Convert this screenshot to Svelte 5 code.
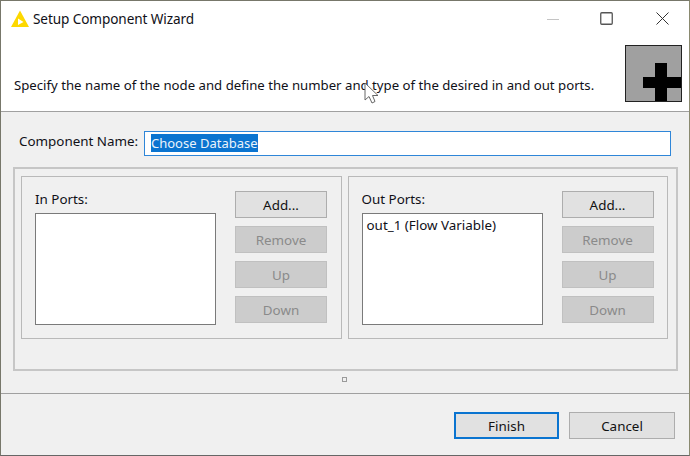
<script>
  const groups = [
    { title: 'In Ports:', items: [] },
    { title: 'Out Ports:', items: ['out_1 (Flow Variable)'] }
  ];
  const actions = [
    { label: 'Add...', disabled: false },
    { label: 'Remove', disabled: true },
    { label: 'Up', disabled: true },
    { label: 'Down', disabled: true }
  ];
</script>

<div class="window">
  <header class="header">
    <div class="titlebar">
      <svg class="logo" width="20" height="18" viewBox="0 0 20 18" aria-hidden="true">
        <path d="M10 0.5 L19 17 L1 17 Z" fill="#fdd800" />
        <path d="M8 8.5 L13.5 12 L8 15 Z" fill="#fff" />
      </svg>
      <span class="title">Setup Component Wizard</span>
      <div class="controls">
        <svg width="12" height="12" viewBox="0 0 12 12" aria-hidden="true"><path d="M0 6.5 H12" stroke="#c4c4c4" stroke-width="1" /></svg>
        <svg width="13" height="13" viewBox="0 0 13 13" aria-hidden="true"><rect x="0.75" y="0.75" width="11.5" height="11.5" rx="1" fill="none" stroke="#555" stroke-width="1.3" /></svg>
        <svg width="13" height="13" viewBox="0 0 13 13" aria-hidden="true"><path d="M0.5 0.5 L12.5 12.5 M12.5 0.5 L0.5 12.5" stroke="#333" stroke-width="1" /></svg>
      </div>
    </div>
    <div class="banner">
      <p class="message">Specify the name of the node and define the number and type of the desired in and out ports.</p>
      <svg class="banner-icon" width="57" height="57" viewBox="0 0 57 57" aria-hidden="true">
        <rect x="0.5" y="0.5" width="56" height="56" fill="#a0a0a0" stroke="#222" />
        <path d="M30 18 H42 V32 H56 V43 H42 V56 H30 V43 H18 V32 H30 Z" fill="#000" />
      </svg>
    </div>
  </header>

  <main class="body">
    <div class="name-row">
      <span class="name-label">Component Name:</span>
      <div class="name-input"><span class="selected">Choose Database</span></div>
    </div>

    <div class="outer">
      {#each groups as group}
        <section class="group">
          <div class="list-col">
            <div class="group-title">{group.title}</div>
            <div class="list">
              {#each group.items as item}
                <div class="list-item">{item}</div>
              {/each}
            </div>
          </div>
          <div class="actions">
            {#each actions as action}
              <div class="btn" class:disabled={action.disabled}>{action.label}</div>
            {/each}
          </div>
        </section>
      {/each}
    </div>

    <div class="sash"><span class="sash-dot"></span></div>
  </main>

  <footer class="footer">
    <div class="btn finish default">Finish</div>
    <div class="btn cancel">Cancel</div>
  </footer>

  <svg class="cursor" width="17" height="23" viewBox="0 0 17 23" aria-hidden="true">
    <path d="M1 1 V18 L5 14.5 L8 21 L11 19.5 L8.5 13.5 L14 13.5 Z" fill="#fff" stroke="#666" stroke-width="1" />
  </svg>
</div>

<style>
  :global(body) {
    margin: 0;
    background: #f0f0f0;
  }

  .window {
    position: relative;
    box-sizing: border-box;
    width: 690px;
    height: 456px;
    display: flex;
    flex-direction: column;
    background: #f0f0f0;
    border-top: 1px solid #77776a;
    border-left: 1px solid #77776a;
    border-right: 1px solid #8a8a70;
    border-bottom: 1px solid #666;
    font-family: "Noto Sans", sans-serif;
    font-size: 13.4px;
    color: #101018;
    overflow: hidden;
  }

  .header {
    height: 110px;
    flex: none;
    background: #fff;
    border-bottom: 1px solid #a0a0a0;
    display: flex;
    flex-direction: column;
  }

  .titlebar {
    height: 35px;
    flex: none;
    display: flex;
    align-items: center;
    padding-left: 9px;
  }

  .logo {
    flex: none;
  }

  .title {
    margin-left: 3px;
    font-size: 13.6px;
    letter-spacing: -0.1px;
  }

  .controls {
    margin-left: auto;
    display: flex;
    align-items: center;
    gap: 42px;
    padding-right: 20px;
  }

  .controls svg:first-child {
    margin-right: -1px;
  }

  .controls svg:nth-child(2) {
    margin-right: 1px;
  }

  .banner {
    flex: 1;
    display: flex;
    padding-left: 13px;
    padding-right: 7px;
    padding-top: 9px;
    justify-content: space-between;
    min-height: 0;
  }

  .message {
    margin: 31px 0 0;
    font-size: 13.2px;
    line-height: 18px;
    white-space: nowrap;
  }

  .banner-icon {
    flex: none;
  }

  .body {
    flex: 1;
    display: flex;
    flex-direction: column;
    padding: 19px 11px 0 12px;
    min-height: 0;
  }

  .name-row {
    display: flex;
    align-items: center;
    padding-left: 6px;
    padding-right: 7px;
  }

  .name-label {
    width: 125px;
    flex: none;
    margin-top: -5px;
  }

  .name-input {
    flex: 1;
    box-sizing: border-box;
    height: 25px;
    background: #fff;
    border: 1px solid #2f86d8;
    display: flex;
    align-items: center;
    padding-left: 6px;
    padding-bottom: 2px;
  }

  .selected {
    background: #0a74d0;
    color: #eaf3fb;
    font-size: 13px;
    line-height: 18px;
  }

  .outer {
    margin-top: 11px;
    box-sizing: border-box;
    height: 204px;
    border: 2px solid #c6c6c6;
    display: flex;
    gap: 6px;
    padding: 7px 8px 0 6px;
  }

  .group {
    flex: 1;
    box-sizing: border-box;
    height: 163px;
    border: 1px solid #b9b9b9;
    display: flex;
    gap: 19px;
    padding: 14px 13px 0 13px;
  }

  .list-col {
    width: 181px;
    flex: none;
  }

  .group-title {
    line-height: 18px;
    margin-top: -1px;
    margin-bottom: 5px;
  }

  .list {
    box-sizing: border-box;
    height: 112px;
    background: #fff;
    border: 1px solid #7a7a7a;
    padding: 2px 4px;
  }

  .list-item {
    line-height: 18px;
  }

  .actions {
    width: 92px;
    flex: none;
    display: flex;
    flex-direction: column;
    gap: 8px;
  }

  .btn {
    box-sizing: border-box;
    height: 27px;
    display: flex;
    align-items: center;
    justify-content: center;
    background: #e1e1e1;
    border: 1px solid #adadad;
    color: #111;
  }

  .btn.disabled {
    background: #cccccc;
    border-color: #c0c0c0;
    color: #8a8a8a;
  }

  .sash {
    height: 22px;
    display: flex;
    align-items: flex-start;
    justify-content: center;
    padding-top: 6px;
    padding-right: 2px;
    box-sizing: border-box;
    flex: none;
  }

  .sash-dot {
    box-sizing: border-box;
    width: 5px;
    height: 5px;
    border: 1px solid #9a9a9a;
  }

  .footer {
    height: 62px;
    flex: none;
    box-sizing: border-box;
    border-top: 1px solid #a0a0a0;
    display: flex;
    justify-content: flex-end;
    gap: 10px;
    padding: 18px 14px 0 0;
  }

  .btn.finish {
    width: 105px;
  }

  .btn.cancel {
    width: 106px;
  }

  .btn.default {
    border: 2px solid #0a74d0;
  }

  .cursor {
    position: absolute;
    left: 363px;
    top: 81px;
  }
</style>
